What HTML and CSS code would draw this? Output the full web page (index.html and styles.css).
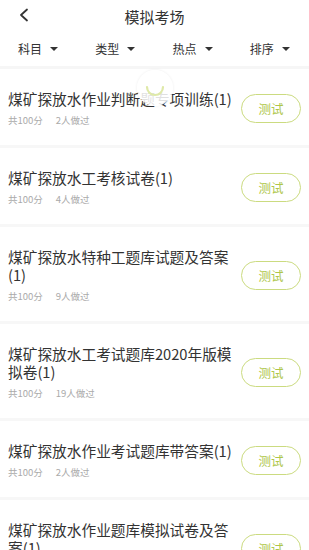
FILE: index.html
```html
<!DOCTYPE html>
<html lang="zh">
<head>
<meta charset="utf-8">
<link rel="stylesheet" href="styles.css">
</head>
<body>
<div class="page">
  <header class="topbar">
    <svg class="back" width="12" height="14" viewBox="0 0 12 14"><path d="M9 1.5 L3 7 L9 12.5" fill="none" stroke="#333" stroke-width="1.8" stroke-linecap="round" stroke-linejoin="round"/></svg>
    <div class="title">模拟考场</div>
  </header>
  <nav class="filters">
    <div class="filter"><span>科目</span><i class="caret"></i></div>
    <div class="filter"><span>类型</span><i class="caret"></i></div>
    <div class="filter"><span>热点</span><i class="caret"></i></div>
    <div class="filter"><span>排序</span><i class="caret"></i></div>
  </nav>
  <main class="list">
    <div class="item">
      <div class="info"><div class="name">煤矿探放水作业判断题专项训练(1)</div><div class="meta"><span>共100分</span><span>2人做过</span></div></div>
      <div class="btn">测试</div>
    </div>
    <div class="item">
      <div class="info"><div class="name">煤矿探放水工考核试卷(1)</div><div class="meta"><span>共100分</span><span>4人做过</span></div></div>
      <div class="btn">测试</div>
    </div>
    <div class="item">
      <div class="info"><div class="name">煤矿探放水特种工题库试题及答案(1)</div><div class="meta"><span>共100分</span><span>9人做过</span></div></div>
      <div class="btn">测试</div>
    </div>
    <div class="item">
      <div class="info"><div class="name">煤矿探放水工考试题库2020年版模拟卷(1)</div><div class="meta"><span>共100分</span><span>19人做过</span></div></div>
      <div class="btn">测试</div>
    </div>
    <div class="item">
      <div class="info"><div class="name">煤矿探放水作业考试题库带答案(1)</div><div class="meta"><span>共100分</span><span>2人做过</span></div></div>
      <div class="btn">测试</div>
    </div>
    <div class="item">
      <div class="info"><div class="name">煤矿探放水作业题库模拟试卷及答案(1)</div><div class="meta"><span>共100分</span><span>3人做过</span></div></div>
      <div class="btn">测试</div>
    </div>
  </main>
  <div class="spinner"><svg width="36" height="36" viewBox="0 0 36 36"><path d="M10 17 A8 8 0 0 0 26 17" fill="none" stroke="#dfe9a8" stroke-width="2.2" stroke-linecap="round"/></svg></div>
</div>
</body>
</html>
```
FILE: styles.css
```css
* { box-sizing: border-box; }
html, body { margin: 0; padding: 0; background: #fff; }
body { font-family: "Noto Sans CJK SC", "Noto Sans", sans-serif; color: #333; }
.page { position: relative; width: 309px; height: 550px; overflow: hidden; }
.topbar { height: 32px; display: flex; align-items: center; justify-content: center; position: relative; }
.back { position: absolute; left: 18px; top: 8px; }
.title { font-size: 15px; color: #333; line-height: 18px; padding-top: 1px; }
.filters { height: 37px; display: grid; grid-template-columns: repeat(4, 1fr); align-items: center; border-bottom: 3px solid #f6f6f6; }
.filter { display: flex; align-items: center; padding-left: 18px; font-size: 12px; color: #333; line-height: 14px; }
.caret { display: block; width: 0; height: 0; border-left: 4px solid transparent; border-right: 4px solid transparent; border-top: 4px solid #333; margin-left: 8px; }
.list { display: flex; flex-direction: column; }
.item { display: flex; align-items: center; padding: 21px 8px 19px 8px; border-bottom: 3px solid #f7f7f7; }
.info { flex: 1; min-width: 0; margin-right: 1px; }
.name { font-size: 14.7px; line-height: 18px; color: #333; }
.meta { margin-top: 6px; font-size: 9.5px; line-height: 12px; color: #aaa; display: flex; gap: 13px; }
.btn { flex: none; width: 60px; height: 29px; border: 1px solid #cbdb80; border-radius: 15px; color: #aec64a; font-size: 12.5px; display: flex; align-items: center; justify-content: center; }
.spinner { position: absolute; left: 137px; top: 70px; width: 36px; height: 36px; border-radius: 50%; background: rgba(255,255,255,0.85); box-shadow: 0 0 3px rgba(0,0,0,0.08); }
.spinner svg { display: block; }
```
